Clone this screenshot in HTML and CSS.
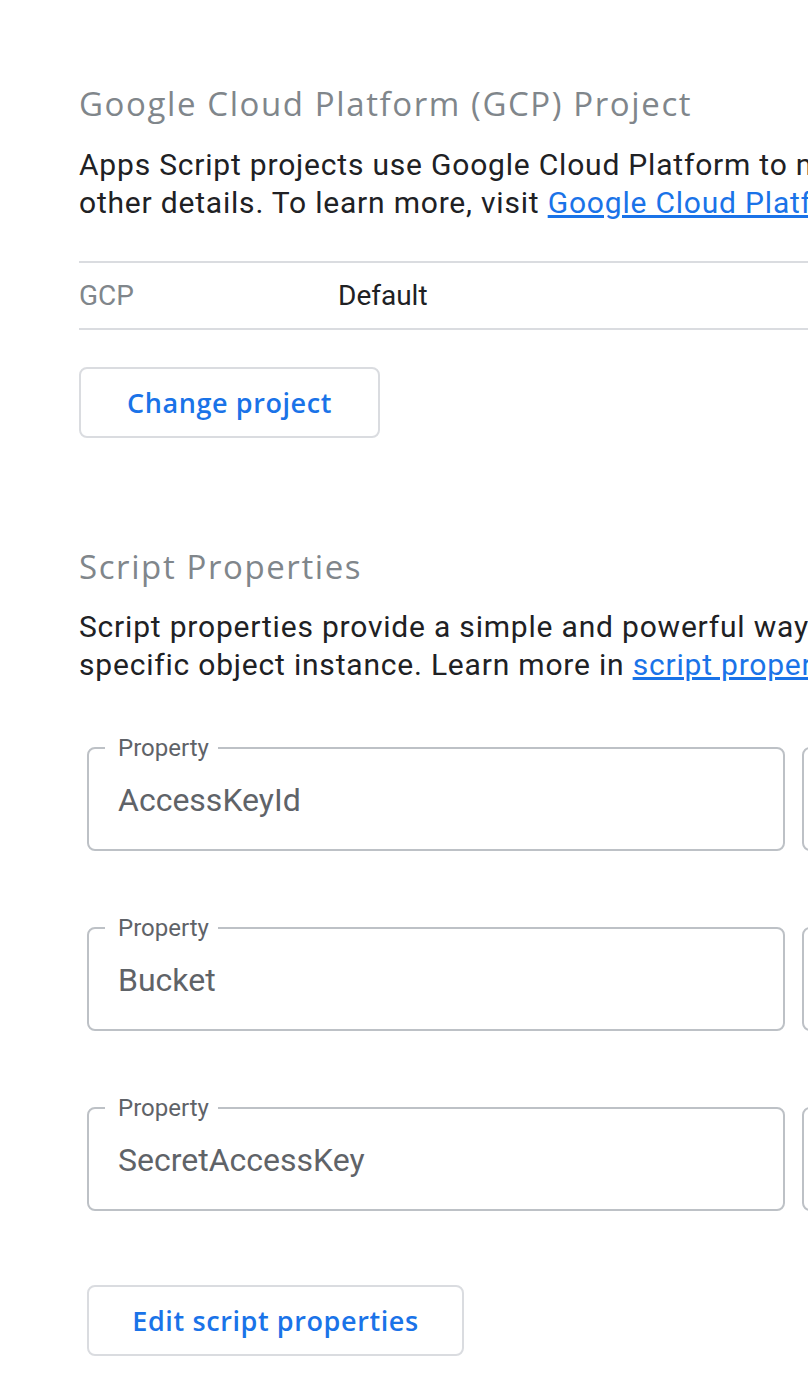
FILE: index.html
```html
<!DOCTYPE html>
<html lang="en">
<head>
<meta charset="utf-8">
<title>Project Settings</title>
<link rel="stylesheet" href="styles.css">
</head>
<body>
<main class="page">
  <section class="section gcp">
    <h2 class="section-title">Google Cloud Platform (GCP) Project</h2>
    <p class="section-text">Apps Script projects use Google Cloud Platform to manage authorizations, advanced services, and<br>other details. To learn more, visit <a href="#" class="link">Google Cloud Platform projects</a>.</p>
    <div class="info-table">
      <div class="info-row">
        <span class="info-label">GCP</span>
        <span class="info-value">Default</span>
      </div>
    </div>
    <button class="btn" type="button">Change project</button>
  </section>

  <section class="section props">
    <h2 class="section-title">Script Properties</h2>
    <p class="section-text">Script properties provide a simple and powerful way to store key-value pairs that are scoped to a<br>specific object instance. Learn more in <a href="#" class="link">script properties</a>.</p>
    <div class="prop-list">
      <div class="prop-row">
        <fieldset class="field">
          <legend class="field-label">Property</legend>
          <div class="field-value">AccessKeyId</div>
        </fieldset>
        <fieldset class="field">
          <legend class="field-label">Value</legend>
          <div class="field-value">••••••••</div>
        </fieldset>
      </div>
      <div class="prop-row">
        <fieldset class="field">
          <legend class="field-label">Property</legend>
          <div class="field-value">Bucket</div>
        </fieldset>
        <fieldset class="field">
          <legend class="field-label">Value</legend>
          <div class="field-value">••••••••</div>
        </fieldset>
      </div>
      <div class="prop-row">
        <fieldset class="field">
          <legend class="field-label">Property</legend>
          <div class="field-value">SecretAccessKey</div>
        </fieldset>
        <fieldset class="field">
          <legend class="field-label">Value</legend>
          <div class="field-value">••••••••</div>
        </fieldset>
      </div>
    </div>
    <button class="btn btn-edit" type="button">Edit script properties</button>
  </section>
</main>
</body>
</html>
```

FILE: styles.css
```css
html, body {
  margin: 0;
  padding: 0;
  background: #ffffff;
  overflow: hidden;
}

body {
  font-family: Roboto, "Liberation Sans", Arial, sans-serif;
  color: #202124;
}

.page {
  width: 1500px;
  padding: 80px 0 0 79px;
  box-sizing: border-box;
}

.section-title {
  margin: 0;
  font-family: "Open Sans", Roboto, sans-serif;
  font-weight: 400;
  font-size: 33px;
  line-height: 48px;
  letter-spacing: 1.6px;
  color: #80868b;
}

.section-text {
  margin: 18px 0 0;
  font-size: 30px;
  line-height: 38px;
  letter-spacing: 0.8px;
  color: #202124;
}

.props .section-text {
  margin-top: 17px;
}

.link {
  color: #1a73e8;
  text-decoration: underline;
}

.info-table {
  margin-top: 39px;
  border-top: 2px solid #dadce0;
  border-bottom: 2px solid #dadce0;
}

.info-row {
  display: flex;
  align-items: center;
  height: 65px;
  font-size: 28px;
}

.info-label {
  width: 259px;
  color: #80868b;
}

.info-value {
  color: #202124;
}

.btn {
  display: block;
  margin-top: 37px;
  width: 301px;
  height: 71px;
  padding: 0;
  background: #ffffff;
  border: 2px solid #dadce0;
  border-radius: 8px;
  font-family: "Open Sans", Roboto, sans-serif;
  font-weight: 600;
  font-size: 27px;
  letter-spacing: 0.6px;
  color: #1a73e8;
}

.props {
  margin-top: 105px;
}

.prop-list {
  display: flex;
  flex-direction: column;
  gap: 65px;
  margin: 52px 0 0 8px;
}

.prop-row {
  display: flex;
  gap: 17px;
}

.field {
  flex: 0 0 auto;
  width: 698px;
  margin: 0;
  padding: 0 0 0 16px;
  box-sizing: border-box;
  border: 2px solid #bdc1c6;
  border-radius: 8px;
}

.field-label {
  padding: 0 9px 0 13px;
  font-size: 24px;
  line-height: 24px;
  color: #5f6368;
}

.field-value {
  padding: 20px 0 29px 13px;
  font-size: 32px;
  line-height: 40px;
  color: #5f6368;
}

.btn-edit {
  margin: 74px 0 0 8px;
  width: 377px;
}
```
